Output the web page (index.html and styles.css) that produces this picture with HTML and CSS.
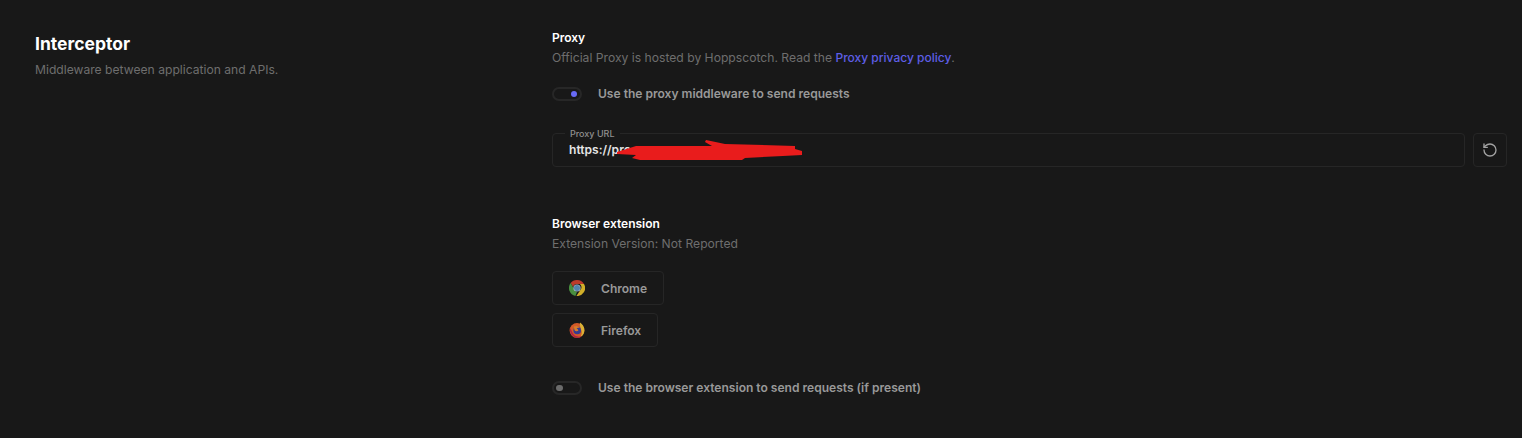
FILE: index.html
```html
<!DOCTYPE html>
<html lang="en">
<head>
<meta charset="utf-8">
<title>Interceptor</title>
<link rel="stylesheet" href="styles.css">
</head>
<body>
<main class="section">
  <header class="intro">
    <h2 class="intro-title">Interceptor</h2>
    <p class="muted">Middleware between application and APIs.</p>
  </header>
  <div class="content">
    <section class="block proxy">
      <h3 class="block-title">Proxy</h3>
      <p class="muted">Official Proxy is hosted by Hoppscotch. Read the <a class="link" href="#">Proxy privacy policy</a>.</p>
      <div class="toggle-row first-toggle">
        <span class="toggle on"><span class="knob"></span></span>
        <span class="toggle-label">Use the proxy middleware to send requests</span>
      </div>
      <div class="url-row">
        <div class="field">
          <span class="field-label">Proxy URL</span>
          <span class="field-value">https://pro</span>
          <svg class="scribble" width="200" height="24" viewBox="0 0 200 24"><path d="M3 14 L22 8 L98 8 L91 4 L92 2 L111 6 L181 8 L181 11 L188 13 L188 17 L169 18 L131 20 L128 22 L26 22 L18 20 L22 17 L3 16Z" fill="#e91c1c"/></svg>
        </div>
        <button class="icon-btn" aria-label="Reset">
          <svg width="16" height="16" viewBox="0 0 24 24" fill="none" stroke="#a3a3a3" stroke-width="2" stroke-linecap="round" stroke-linejoin="round"><path d="M3 12a9 9 0 1 0 9-9 9.75 9.75 0 0 0-6.74 2.74L3 8"/><path d="M3 3v5h5"/></svg>
        </button>
      </div>
    </section>
    <section class="block extension">
      <h3 class="block-title">Browser extension</h3>
      <p class="muted">Extension Version: Not Reported</p>
      <div class="buttons">
        <a class="ext-btn" href="#">
          <svg class="ext-icon" width="16" height="16" viewBox="0 0 16 16">
            <path d="M8 0a8 8 0 0 1 7 4H8a4 4 0 0 0-3.900 3L1.600 3.100A8 8 0 0 1 8 0Z" fill="#cf3f2e"/>
            <path d="M1.600 3.100 5 9a4 4 0 0 0 3 3l-1.600 3.900A8 8 0 0 1 1.600 3.100Z" fill="#4f9c45"/>
            <path d="M15 4a8 8 0 0 1-7.600 12L11.400 10a4 4 0 0 0-.6-6Z" fill="#e6c02b"/>
            <circle cx="8" cy="8" r="3.600" fill="#c9d3da"/>
            <circle cx="8" cy="8" r="3" fill="#5a8fc0"/>
          </svg>
          <span>Chrome</span>
        </a>
        <a class="ext-btn" href="#">
          <svg class="ext-icon" width="16" height="16" viewBox="0 0 16 16">
            <circle cx="8" cy="8.400" r="7.400" fill="#e8622a"/>
            <path d="M11 .4c2.600 1.800 4.500 4.400 4.400 8-.1 2.600-1.400 5-4 6.300 1.600-2.200 1.800-4.700.8-7C11.500 5.500 10.600 3 11 .4Z" fill="#eec33a"/>
            <path d="M1 6C.3 10 3 15.500 8 15.800c2 .1 3.600-.6 4.600-1.600-3 1-7.600.4-9-3.400C2.700 9 2 7.500 1 6Z" fill="#c3244a"/>
            <circle cx="8.200" cy="8.400" r="3.800" fill="#3a3f9e"/>
            <path d="M5 4.600c2-1 5-.6 6 1.600-1.500-.6-2.800-.4-3.400.4 1 .4 1.600 1 1.800 1.800-.6.800-2 1-2.800.6-1 0-1.600-1.400-1.600-4.400Z" fill="#f08a2a"/>
          </svg>
          <span>Firefox</span>
        </a>
      </div>
      <div class="toggle-row last-toggle">
        <span class="toggle"><span class="knob"></span></span>
        <span class="toggle-label">Use the browser extension to send requests (if present)</span>
      </div>
    </section>
  </div>
</main>
</body>
</html>
```
FILE: styles.css
```css
* { box-sizing: border-box; }
html, body { margin: 0; padding: 0; }
body {
  background: #181818;
  color: #a3a3a3;
  font-family: Inter, "Liberation Sans", sans-serif;
  font-size: 12.05px;
  line-height: 16px;
  height: 438px;
  overflow: hidden;
}
.section {
  display: grid;
  grid-template-columns: 517px 1fr;
  padding: 29px 15px 0 35px;
}
.intro-title {
  margin: 5px 0 0;
  font-size: 17.5px;
  line-height: 20px;
  font-weight: 700;
  color: #fff;
}
.intro .muted { margin-top: 8px; font-size: 12.13px; }
.muted {
  margin: 3px 0 0;
  color: #6e6e6e;
  font-size: 12.15px;
  line-height: 16px;
  font-weight: 400;
}
.block-title {
  margin: 0;
  font-size: 12px;
  line-height: 18px;
  font-weight: 600;
  color: #fff;
}
.link { color: #5e5ee6; font-size: 12px; text-decoration: none; font-weight: 500; }
.toggle-row { display: flex; align-items: center; gap: 16px; }
.first-toggle { margin-top: 20px; }
.toggle-label { font-weight: 600; color: #999; }
.toggle {
  display: flex;
  align-items: center;
  width: 30px;
  height: 14px;
  border: 2px solid #272727;
  border-radius: 7px;
  padding: 0 3px;
}
.toggle.on { justify-content: flex-end; }
.knob { width: 6.5px; height: 6.5px; border-radius: 50%; background: #6b6b6b; }
.on .knob { background: #686af5; }
.last-toggle .knob { margin-left: -1px; }
.url-row { display: flex; gap: 8px; margin-top: 31px; }
.field {
  position: relative;
  flex: 1;
  height: 34px;
  border: 1px solid #262626;
  border-radius: 4px;
  padding: 8px 16px;
}
.field-label {
  position: absolute;
  top: -8px;
  left: 12px;
  padding: 0 5px;
  background: #181818;
  font-size: 9px;
  color: #8f8f8f;
  font-weight: 500;
}
.field-value { color: #e5e5e5; font-weight: 600; }
.scribble { position: absolute; top: 4px; left: 61px; }
.icon-btn {
  display: flex;
  align-items: center;
  justify-content: center;
  width: 34px;
  height: 34px;
  background: none;
  border: 1px solid #262626;
  border-radius: 4px;
  padding: 0;
}
.extension { margin-top: 48px; }
.buttons { display: flex; flex-direction: column; align-items: flex-start; gap: 8px; margin-top: 19px; }
.ext-btn {
  display: flex;
  align-items: center;
  gap: 16px;
  height: 34px;
  padding: 0 16px;
  border: 1px solid #262626;
  border-radius: 4px;
  color: #999;
  font-weight: 600;
  text-decoration: none;
}
.ext-btn span { padding-top: 1px; }
.ext-icon { display: block; opacity: .9; }
.last-toggle { margin-top: 33px; }
```
